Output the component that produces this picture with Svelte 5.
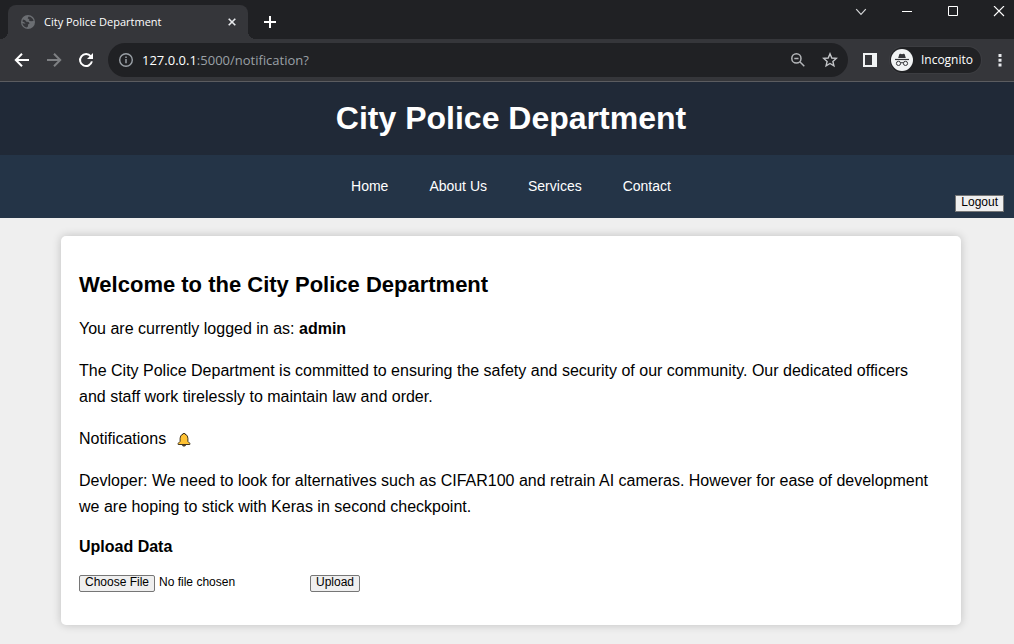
<script>
  const links = ['Home', 'About Us', 'Services', 'Contact'];
  let address = $state('127.0.0.1:5000/notification?');
  const host = '127.0.0.1';
</script>

<svelte:head><title>City Police Department</title></svelte:head>

<div class="browser">
  <div class="tabs">
    <div class="tab">
      <svg class="globe" width="14" height="14" viewBox="0 0 14 14" aria-hidden="true">
        <circle cx="7" cy="7" r="7" fill="#6b6e72" />
        <path d="M2 4.600 4.200 5.200 5.400 6.700 7.600 7 8.600 8.400 7.200 9.200 6.800 11.800 5.600 12.600A5.800 5.800 0 0 1 1.300 8.300L4.600 8.800 3.200 7.200 1.400 6.600ZM7.600 1.400 6.600 3.200 8.400 4.400 7.800 5.600 9.800 6.200 12.600 6A5.800 5.800 0 0 0 7.600 1.400Z" fill="#35363a" />
      </svg>
      <span class="tab-title">City Police Department</span>
      <button class="plain close" aria-label="Close tab">
        <svg width="8" height="8" viewBox="0 0 8 8"><path d="M.7.7l6.6 6.6M7.3.7.7 7.3" stroke="#e8eaed" stroke-width="1.6" /></svg>
      </button>
    </div>
    <button class="plain new-tab" aria-label="New tab">
      <svg width="12" height="12" viewBox="0 0 12 12"><path d="M6 0v12M0 6h12" stroke="#fff" stroke-width="2" /></svg>
    </button>
    <div class="window-controls">
      <button class="plain" aria-label="Search tabs">
        <svg width="12" height="12" viewBox="0 0 12 12"><path d="M1.2 3.2 6 8.4l4.8-5.2" fill="none" stroke="#d5d6d8" stroke-width="1.2" /></svg>
      </button>
      <button class="plain" aria-label="Minimize">
        <svg width="12" height="12" viewBox="0 0 12 12"><path d="M1 5.5h10" stroke="#fff" /></svg>
      </button>
      <button class="plain" aria-label="Maximize">
        <svg width="12" height="12" viewBox="0 0 12 12"><path d="M1.5.5h9v9h-9z" fill="none" stroke="#fff" /></svg>
      </button>
      <button class="plain" aria-label="Close window">
        <svg width="12" height="12" viewBox="0 0 12 12"><path d="M1 0l10 10M11 0 1 10" stroke="#fff" stroke-width="1.1" /></svg>
      </button>
    </div>
  </div>

  <div class="toolbar">
    <button class="plain tool" aria-label="Back">
      <svg width="16" height="16" viewBox="0 0 16 16"><path d="M15 8H2M8 1.8 1.8 8 8 14.2" fill="none" stroke="#fff" stroke-width="2" /></svg>
    </button>
    <button class="plain tool" aria-label="Forward">
      <svg width="16" height="16" viewBox="0 0 16 16"><path d="M1 8h13M8 1.8 14.2 8 8 14.2" fill="none" stroke="#7e8083" stroke-width="2" /></svg>
    </button>
    <button class="plain tool" aria-label="Reload">
      <svg width="16" height="16" viewBox="0 0 16 16"><path d="M12.8 4.4A6 6 0 1 0 13.9 9.4" fill="none" stroke="#fff" stroke-width="2" /><path d="M15 1v6H9Z" fill="#fff" /></svg>
    </button>
    <div class="omnibox">
      <button class="plain" aria-label="Site information">
        <svg width="14" height="14" viewBox="0 0 14 14"><circle cx="7" cy="7" r="6.3" fill="none" stroke="#9aa0a6" stroke-width="1.4" /><path d="M7 6v4.3M7 3.4V5" stroke="#9aa0a6" stroke-width="1.5" /></svg>
      </button>
      <div class="address">
        <div class="address-text" aria-hidden="true"><span class="host">{host}</span>{address.slice(host.length)}</div>
        <input type="text" aria-label="Address" bind:value={address} />
      </div>
      <button class="plain" aria-label="Zoom">
        <svg width="14" height="14" viewBox="0 0 14 14"><circle cx="5.4" cy="5.4" r="4.6" fill="none" stroke="#b3b5b8" stroke-width="1.5" /><path d="M3.3 5.4h4.2M8.8 8.8l4.5 4.5" stroke="#b3b5b8" stroke-width="1.5" /></svg>
      </button>
      <button class="plain" aria-label="Bookmark this page">
        <svg width="16" height="16" viewBox="0 0 16 16"><path d="M8 1.8 9.8 6l4.5.4-3.4 3 1 4.400L8 11.500l-3.900 2.300 1-4.400-3.400-3L6.200 6Z" fill="none" stroke="#c4c6c9" stroke-width="1.400" /></svg>
      </button>
    </div>
    <button class="plain panel" aria-label="Side panel">
      <svg width="14" height="14" viewBox="0 0 14 14"><path fill-rule="evenodd" d="M0 0h14v14H0ZM2 2v10h7V2Z" fill="#f1f3f4" /></svg>
    </button>
    <button class="plain incognito">
      <svg width="22" height="22" viewBox="0 0 22 22" aria-hidden="true">
        <circle cx="11" cy="11" r="11" fill="#f1f3f4" />
        <path d="M7.2 9 8.3 5.3q.3-.9 1.2-.6l1.5.5 1.5-.5q.9-.3 1.2.6L14.8 9Z" fill="#35363a" />
        <path d="M4 10.5h14" stroke="#35363a" stroke-width="1.2" />
        <path d="M9.4 14q1.6-.8 3.2 0" fill="none" stroke="#35363a" />
        <circle cx="7.5" cy="14.4" r="2.1" fill="none" stroke="#35363a" />
        <circle cx="14.5" cy="14.4" r="2.1" fill="none" stroke="#35363a" />
      </svg>
      <span>Incognito</span>
    </button>
    <button class="plain more" aria-label="Menu">
      <svg width="4" height="14" viewBox="0 0 4 14"><path d="M.5 1h3v3h-3ZM.5 5.7h3v3h-3ZM.5 10.4h3v3h-3Z" fill="#e8eaed" /></svg>
    </button>
  </div>
</div>

<header>
  <h1>City Police Department</h1>
</header>

<nav>
  <ul>
    {#each links as link}
      <li><a href="#top">{link}</a></li>
    {/each}
  </ul>
  <button class="form-button">Logout</button>
</nav>

<main>
  <section class="card">
    <h2>Welcome to the City Police Department</h2>
    <p>You are currently logged in as: <strong>admin</strong></p>
    <p>The City Police Department is committed to ensuring the safety and security of our community. Our dedicated officers and staff work tirelessly to maintain law and order.</p>
    <p class="notifications">
      Notifications
      <svg width="14" height="16" viewBox="0 0 14 16" role="img" aria-label="Bell">
        <path d="M5 13.500h4Q8.600 15.200 7 15.200T5 13.500Z" fill="#6b4a18" stroke="#333" stroke-width=".8" />
        <path d="M6 3.200V2.500h2v.7q2.900.8 2.900 4v3.200l1.900 1.900v1.200H1.200v-1.200l1.900-1.900V7.200Q3.100 4 6 3.200Z" fill="#ffc233" stroke="#41351f" stroke-linejoin="round" />
      </svg>
    </p>
    <p>Devloper: We need to look for alternatives such as CIFAR100 and retrain AI cameras. However for ease of development we are hoping to stick with Keras in second checkpoint.</p>
    <h3>Upload Data</h3>
    <form onsubmit={(event) => event.preventDefault()}>
      <input type="file" aria-label="Upload Data" />
      <button class="form-button">Upload</button>
    </form>
  </section>
</main>

<style>
  :global(body) {
    background: #efefef;
    font-family: "Liberation Sans", Arial, sans-serif;
    font-size: 16px;
    line-height: 26px;
    color: #000;
  }

  .browser {
    font-family: "Open Sans", "Segoe UI", sans-serif;
    color: #fff;
  }

  .plain {
    display: flex;
    align-items: center;
    justify-content: center;
    padding: 0;
    border: 0;
    background: none;
    color: inherit;
    font: inherit;
  }

  .tabs {
    display: flex;
    height: 39px;
    padding-left: 8px;
    background: #202124;
  }

  .tab {
    position: relative;
    display: flex;
    align-items: center;
    box-sizing: border-box;
    width: 240px;
    margin-top: 5px;
    padding: 0 12px 0 13px;
    border-radius: 8px 8px 0 0;
    background: #35363a;
  }

  .tab::before,
  .tab::after {
    content: "";
    position: absolute;
    bottom: 0;
    width: 8px;
    height: 8px;
  }

  .tab::before {
    left: -8px;
    background: radial-gradient(circle at 0 0, transparent 8px, #35363a 8px);
  }

  .tab::after {
    right: -8px;
    background: radial-gradient(circle at 100% 0, transparent 8px, #35363a 8px);
  }

  .tab-title {
    flex: 1;
    margin-left: 9px;
    font-size: 11px;
    white-space: nowrap;
  }

  .new-tab {
    width: 44px;
    height: 44px;
  }

  .window-controls {
    display: flex;
    gap: 34px;
    height: 24px;
    margin-left: auto;
    padding-right: 9px;
  }

  .toolbar {
    display: flex;
    align-items: center;
    height: 42px;
    padding-left: 6px;
    border-bottom: 1px solid #5b5c60;
    background: #35363a;
  }

  .tool {
    width: 32px;
    height: 32px;
  }

  .omnibox {
    display: flex;
    flex: 1;
    align-items: center;
    gap: 17px;
    height: 34px;
    margin-left: 6px;
    padding: 0 10px 0 11px;
    border-radius: 17px;
    background: #202124;
  }

  .address {
    display: grid;
    flex: 1;
    margin-left: -8px;
    font-size: 13px;
    line-height: 20px;
  }

  .address-text,
  .address input {
    grid-area: 1 / 1;
    min-width: 0;
    padding: 0;
    border: 0;
  }

  .address-text {
    color: #9aa0a6;
    white-space: nowrap;
  }

  .host {
    color: #fff;
  }

  .address input {
    background: none;
    color: transparent;
    caret-color: #fff;
    font: inherit;
    outline: 0;
  }

  .panel {
    margin: 0 13px 0 15px;
  }

  .incognito {
    gap: 8px;
    height: 26px;
    padding: 0 8px 0 1px;
    border-radius: 13px;
    background: #202124;
    box-shadow: 0 0 0 1px #3c3d41;
    font-size: 12px;
  }

  .more {
    width: 28px;
    margin-left: 5px;
  }

  header {
    padding: 10px 0 11px 8px;
    background: #202937;
    color: #fff;
    text-align: center;
  }

  h1 {
    margin: 0;
    font-size: 32px;
    line-height: 52px;
  }

  nav {
    display: grid;
    padding: 18px 10px 6px;
    background: #243447;
  }

  nav ul {
    display: flex;
    justify-content: center;
    gap: 41px;
    margin: 0;
    padding: 0 0 0 8px;
    list-style: none;
    font-size: 14px;
    line-height: 26px;
  }

  nav a {
    color: #fff;
    text-decoration: none;
  }

  nav .form-button {
    justify-self: end;
    margin-top: -4px;
  }

  .form-button,
  input::file-selector-button {
    box-sizing: border-box;
    height: 17px;
    padding: 0 5px 2px;
    border: 1px solid #767676;
    border-radius: 2px;
    background: #efefef;
    color: #000;
    font: 12px/13px "Liberation Sans", Arial, sans-serif;
  }

  nav .form-button {
    border-radius: 0;
  }

  main {
    padding: 18px 0 18px 8px;
  }

  .card {
    box-sizing: border-box;
    max-width: 900px;
    margin: 0 auto;
    padding: 18px 24px 18px 18px;
    border-radius: 5px;
    background: #fff;
    box-shadow: 0 0 10px rgba(0, 0, 0, 0.2);
  }

  h2 {
    margin: 16px 0;
    font-size: 22px;
    line-height: 30px;
  }

  p {
    margin: 0 0 16px;
  }

  .notifications {
    display: flex;
    align-items: center;
    gap: 11px;
  }

  h3 {
    margin: 0 0 16px;
    font-size: 16px;
    line-height: 22px;
  }

  form {
    display: flex;
    align-items: center;
    gap: 4px;
    margin-bottom: 15px;
  }

  input[type="file"] {
    width: 227px;
    color: #000;
    font: 12px/17px "Liberation Sans", Arial, sans-serif;
  }
</style>
